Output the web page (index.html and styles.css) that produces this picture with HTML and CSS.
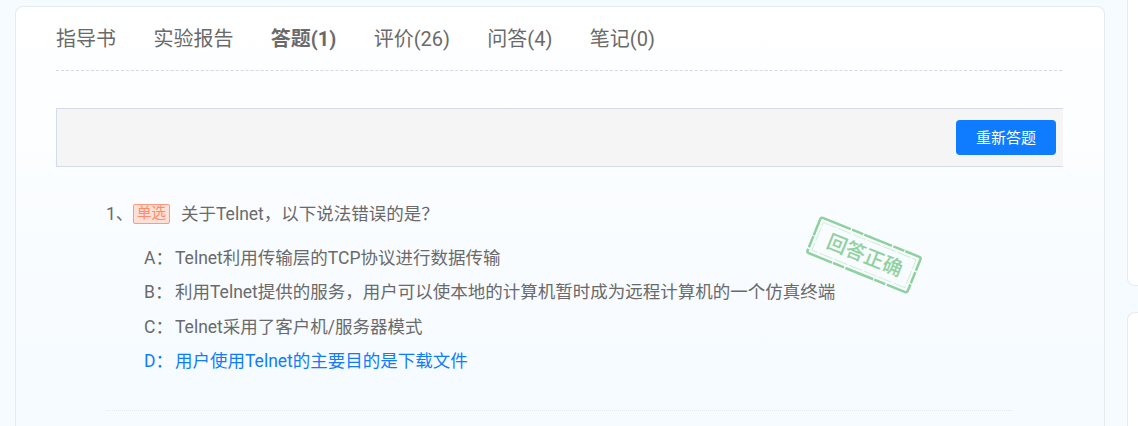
FILE: index.html
```html
<!DOCTYPE html>
<html lang="zh-CN">
<head>
    <meta charset="UTF-8">
    <meta name="viewport" content="width=device-width, initial-scale=1.0">
    <title>答题</title>
    <link rel="stylesheet" href="styles.css">
</head>
<body>

    <div class="page">
        <div class="main-card">
            <div class="tabs">
                <a class="tab">指导书</a>
                <a class="tab">实验报告</a>
                <a class="tab active">答题(1)</a>
                <a class="tab">评价(26)</a>
                <a class="tab">问答(4)</a>
                <a class="tab">笔记(0)</a>
            </div>

            <div class="action-bar">
                <button class="redo-btn">重新答题</button>
            </div>

            <div class="question">
                <div class="question-title">
                    <span class="num">1、</span><span class="badge">单选</span><span class="q-text">关于Telnet，以下说法错误的是？</span>
                </div>
                <ul class="options">
                    <li><span class="letter">A：</span>Telnet利用传输层的TCP协议进行数据传输</li>
                    <li><span class="letter">B：</span>利用Telnet提供的服务，用户可以使本地的计算机暂时成为远程计算机的一个仿真终端</li>
                    <li><span class="letter">C：</span>Telnet采用了客户机/服务器模式</li>
                    <li class="correct"><span class="letter">D：</span>用户使用Telnet的主要目的是下载文件</li>
                </ul>

                <svg class="stamp" width="130" height="110" viewBox="0 0 130 110">
                    <g transform="rotate(22 65 55)">
                        <rect class="stamp-outer" x="11" y="36" width="108" height="38" rx="2"/>
                        <rect class="stamp-inner" x="15" y="40" width="100" height="30"/>
                        <text class="stamp-text" x="66" y="62" text-anchor="middle">回答正确</text>
                    </g>
                </svg>
            </div>
        </div>

        <div class="side">
            <div class="side-card top"></div>
            <div class="side-card bottom"></div>
        </div>
    </div>

</body>
</html>
```

FILE: styles.css
```css
html, body {
    margin: 0;
    height: 426px;
    overflow: hidden;
}
body {
    font-family: Roboto, "Noto Sans CJK SC", sans-serif;
    background-color: #f6fbff;
    color: #6a6a6a;
}
.page {
    display: flex;
    align-items: flex-start;
    padding: 6px 0 0 15px;
    gap: 22px;
}
.main-card {
    box-sizing: border-box;
    width: 1090px;
    height: 420px;
    flex-shrink: 0;
    padding: 0 42px 0 40px;
    background: linear-gradient(#fff, #f6fbff 350px);
    border: 1px solid #e6ebf2;
    border-bottom: none;
    border-radius: 8px 8px 0 0;
}
.tabs {
    display: flex;
    gap: 37.4px;
    height: 64px;
    padding-bottom: 3px;
    box-sizing: border-box;
    align-items: center;
    border-bottom: 1px dashed #d9d9d9;
}
.tab {
    font-size: 20px;
    color: #6a6a6a;
}
.tab.active {
    font-weight: bold;
}
.action-bar {
    display: flex;
    justify-content: flex-end;
    align-items: center;
    box-sizing: border-box;
    margin-top: 37px;
    margin-right: -1px;
    height: 59px;
    padding-right: 7px;
    background: #f5f5f5;
    border: 1px solid #d5dbe8;
    border-right: none;
}
.redo-btn {
    width: 100px;
    height: 35px;
    padding: 0 0 3px;
    border: none;
    border-radius: 4px;
    background-color: #0f7bff;
    color: #fff;
    font-family: inherit;
    font-size: 15px;
}
.question {
    position: relative;
    margin: 0 49px 0 50px;
    height: 243px;
    border-bottom: 1px dotted #e6e9ee;
}
.question-title {
    display: flex;
    align-items: center;
    padding-top: 33px;
    height: 24px;
    font-size: 17.5px;
}
.num {
    width: 27px;
}
.badge {
    box-sizing: border-box;
    width: 37px;
    height: 20px;
    line-height: 18px;
    margin-top: 4px;
    text-align: center;
    font-size: 14.5px;
    color: #ff8a65;
    background: #ffe0d6;
    border: 1px solid #ff9a7e;
    border-radius: 2px;
    margin-right: 11px;
}
.options {
    list-style: none;
    margin: 17px 0 0 38px;
    padding: 0;
    font-size: 17.5px;
}
.options li {
    height: 34.4px;
    line-height: 34.4px;
    white-space: nowrap;
}
.letter {
    display: inline-block;
    width: 31px;
}
.options .correct {
    color: #0f7bff;
}
.stamp {
    position: absolute;
    left: 693px;
    top: 33px;
}
.stamp-outer {
    fill: none;
    stroke: #8fd19e;
    stroke-width: 2.5;
    stroke-dasharray: 30 1.5 12 1;
}
.stamp-inner {
    fill: none;
    stroke: #cfeed6;
    stroke-width: 1;
    stroke-dasharray: 14 2;
}
.stamp-text {
    font-size: 20px;
    font-weight: 500;
    fill: #8fd19e;
}
.side {
    display: flex;
    flex-direction: column;
    gap: 26px;
    flex-shrink: 0;
}
.side-card {
    box-sizing: border-box;
    width: 11px;
    background: #fff;
    border: 1px solid #e6ebf2;
    border-right: none;
    border-radius: 8px 0 0 8px;
}
.side-card.top {
    height: 286px;
    margin-top: -6px;
    border-top: none;
    border-radius: 0 0 0 8px;
}
.side-card.bottom {
    height: 114px;
    border-bottom: none;
    border-radius: 8px 0 0 0;
}
```
